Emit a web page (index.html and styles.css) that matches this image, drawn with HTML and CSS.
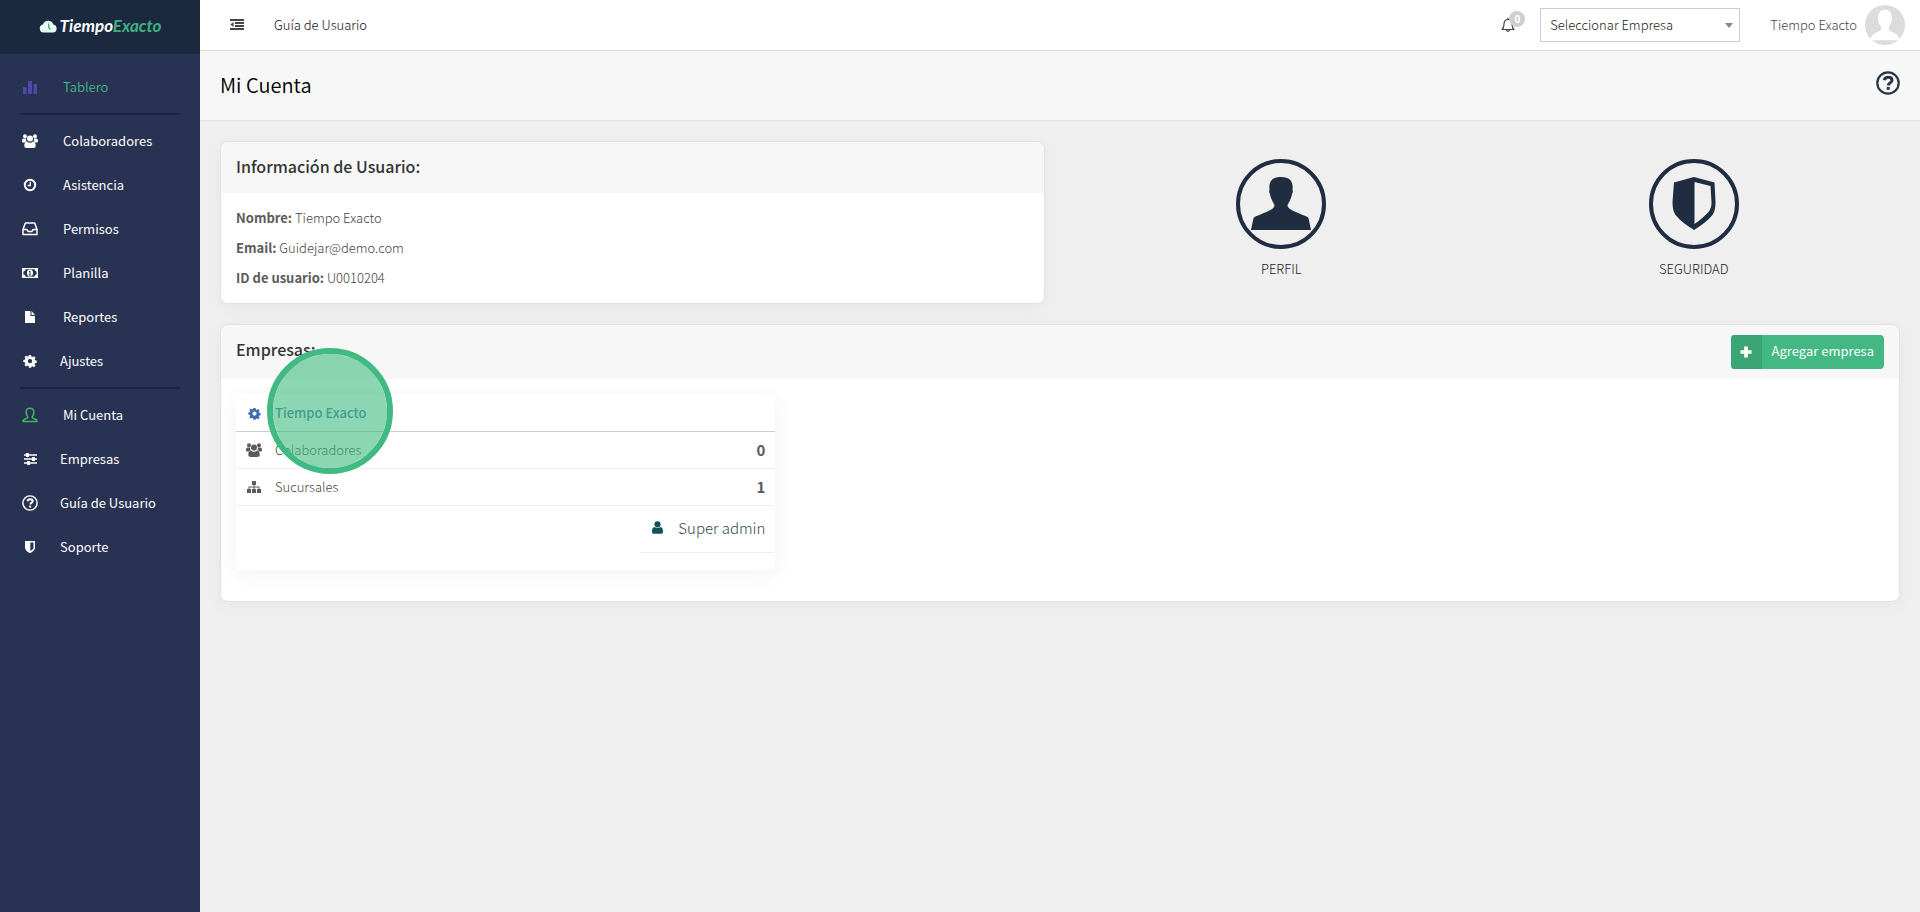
FILE: index.html
```
<!DOCTYPE html>
<html lang="es">
<head>
    <meta charset="UTF-8">
    <meta name="viewport" content="width=device-width, initial-scale=1.0">
    <title>Mi Cuenta - Tiempo Exacto</title>
    <link rel="stylesheet" href="styles.css">
</head>
<body>
    <!-- Iconos compartidos -->
    <svg class="sprite" aria-hidden="true">
        <symbol id="i-users" viewBox="0 0 16 14">
            <circle cx="3" cy="2.2" r="2"/><circle cx="13" cy="2.2" r="2"/>
            <path d="M1.6 4.4h2.6c-.5 1.5 0 2.600.6 3.200C3.800 7.600 3.200 8 2.700 8.600H1.400C.4 8.600 0 8 0 7.200 0 5.600.4 4.400 1.600 4.400zM14.400 4.400h-2.600c.5 1.500 0 2.600-.6 3.200 1 0 1.600.4 2.100 1h1.300c1 0 1.400-.6 1.400-1.400 0-1.600-.4-2.800-1.600-2.800z"/>
            <circle cx="8" cy="4.500" r="3"/>
            <path d="M5 7.600c.9.800 1.900 1.200 3 1.200s2.100-.4 3-1.200c2 .1 2.700 2 2.700 4.200 0 1.400-.9 2.200-2.200 2.200h-7c-1.300 0-2.200-.8-2.200-2.200C2.300 9.600 3 7.700 5 7.600z"/>
        </symbol>
        <symbol id="i-cog" viewBox="0 0 14 14">
            <path fill-rule="evenodd" d="M5.900 1h2.200l.4 1.700 1 .4 1.500-.9 1.500 1.500-.9 1.500.4 1 1.700.4v2.200l-1.700.4-.4 1 .9 1.500-1.500 1.500-1.500-.9-1 .4L8.100 13.700H5.900l-.4-1.700-1-.4-1.500.9L1.500 11l.9-1.500-.4-1L.3 8.100V6l1.700-.4.4-1-.9-1.500L3 1.700l1.500.9 1-.4zM7 4.900a2.200 2.200 0 1 0 0 4.400 2.200 2.200 0 0 0 0-4.400z"/>
        </symbol>
        <symbol id="i-help" viewBox="0 0 24 24">
            <circle cx="12" cy="12" r="10.700" fill="none" stroke="currentColor" stroke-width="2.200"/>
            <path d="M8.300 9.300c.4-2 1.800-3 3.900-3 2.300 0 3.800 1.100 3.800 2.900 0 2.600-3.700 2.700-3.700 5.200" fill="none" stroke="currentColor" stroke-width="3"/>
            <rect x="10.700" y="16" width="3" height="2.800"/>
        </symbol>
    </svg>

    <div class="app">
        <aside class="sidebar">
            <a class="logo" href="#">
                <svg width="19" height="13" viewBox="0 0 18 13"><path d="M4 12.500a4 4 0 0 1-.6-7.900A5.500 5.500 0 0 1 13.800 4.500 4.100 4.100 0 0 1 14 12.500z" fill="#eafaf4"/><path d="M9.200 3.500v4l1.800 2" fill="none" stroke="#3f9d7c" stroke-width="1.200"/></svg>
                <span>Tiempo<em>Exacto</em></span>
            </a>
            <nav class="menu">
                <a class="menu-item active" href="#">
                    <svg class="icon-stats" width="14" height="14" viewBox="0 0 14 14"><path d="M0 7h3.500v7H0zM5 1h4v13H5zM10.500 4H14v10h-3.500z"/></svg>
                    Tablero
                </a>
                <hr>
                <a class="menu-item" href="#"><svg width="16" height="14"><use href="#i-users"/></svg>Colaboradores</a>
                <a class="menu-item" href="#">
                    <svg width="14" height="14" viewBox="0 0 14 14"><g fill="none" stroke="currentColor" stroke-width="2"><circle cx="7" cy="7" r="5.200"/><path d="M7.300 3.800V7.500H4.600" stroke-width="1.300"/></g></svg>
                    Asistencia
                </a>
                <a class="menu-item" href="#">
                    <svg width="16" height="14" viewBox="0 0 16 14"><path d="M1 7.500L3.300 1h9.400L15 7.500V12.500H1zM1 7.500h3.800l1.400 2h3.600l1.400-2H15" fill="none" stroke="currentColor" stroke-width="1.500" stroke-linejoin="round"/></svg>
                    Permisos
                </a>
                <a class="menu-item" href="#">
                    <svg width="16" height="12" viewBox="0 0 16 12"><path fill-rule="evenodd" d="M0 1h16v10H0zM3.500 2.300A2.200 2.200 0 0 1 1.400 4.400v3.200a2.200 2.200 0 0 1 2.100 2.100h9a2.200 2.200 0 0 1 2.100-2.100V4.400a2.200 2.200 0 0 1-2.100-2.100z"/><ellipse cx="8" cy="6" rx="3" ry="3.400"/><path d="M7 4.800l1-.8v3.800M6.900 8h2.300" fill="none" stroke="#283252"/></svg>
                    Planilla
                </a>
                <a class="menu-item" href="#">
                    <svg width="12" height="14" viewBox="0 0 12 14"><path d="M1 1h5.500v5H11v7H1zM7.500 1L11 5H7.500z"/></svg>
                    Reportes
                </a>
                <a class="menu-item short" href="#"><svg width="14" height="14"><use href="#i-cog"/></svg>Ajustes</a>
                <hr>
                <a class="menu-item" href="#">
                    <svg class="icon-user" width="16" height="16" viewBox="0 0 16 16"><path d="M1 14.500c0-2.600 2.600-2.400 4.300-3.300.9-.5.5-1.500 0-2.200C4.300 7.500 3.900 6 4.200 4 4.500 2.100 6 1.300 8 1.300s3.500.8 3.800 2.700c.3 2-.1 3.500-1.100 5-.5.7-.9 1.700 0 2.200 1.700.9 4.300.7 4.300 3.300z" fill="none" stroke="currentColor" stroke-width="1.500" stroke-linejoin="round"/></svg>
                    Mi Cuenta
                </a>
                <a class="menu-item short" href="#">
                    <svg width="13" height="12" viewBox="0 0 13 12"><path d="M0 1.300h13v1.400H0zM0 5.300h13v1.400H0zM0 9.300h13v1.400H0zM2 0h3v4H2zM8 4h3v4H8zM3 8h3v4H3z"/></svg>
                    Empresas
                </a>
                <a class="menu-item short" href="#"><svg width="16" height="16"><use href="#i-help"/></svg>Guía de Usuario</a>
                <a class="menu-item short" href="#">
                    <svg width="12" height="14" viewBox="0 0 12 14"><path fill-rule="evenodd" d="M1 1h10v6.500c0 3-3 4.700-5 5.500-2-.8-5-2.500-5-5.500zM6.300 2.500v8.500c1.600-.8 3.200-2 3.200-3.500v-5z"/></svg>
                    Soporte
                </a>
            </nav>
        </aside>

        <div class="page">
            <header class="topbar">
                <button class="toggle" type="button" aria-label="Contraer menú">
                    <svg width="14" height="12" viewBox="0 0 14 12"><path d="M0 0h14v2H0zM5 3h9v2H5zM5 6h9v2H5zM0 9h14v2H0zM3.500 3v5L.3 5.500z"/></svg>
                </button>
                <a class="guide" href="#">Guía de Usuario</a>
                <button class="bell" type="button" aria-label="Notificaciones">
                    <svg width="14" height="16" viewBox="0 0 14 16"><path d="M1 12.500c1.500-1.300 2-2.500 2-5.500 0-2.800 1.500-4.700 4-4.700s4 1.900 4 4.700c0 3 .5 4.200 2 5.500zM7 2.300V.8M5.500 12.800a1.500 1.500 0 0 0 3 0" fill="none" stroke="currentColor" stroke-width="1.200" stroke-linejoin="round"/></svg>
                    <span class="badge">0</span>
                </button>
                <div class="company">
                    <select aria-label="Empresa">
                        <option>Seleccionar Empresa</option>
                    </select>
                </div>
                <a class="user" href="#">
                    Tiempo Exacto
                    <svg width="40" height="40" viewBox="0 0 40 40"><circle cx="20" cy="20" r="20" fill="#dcdcdc"/><path d="M13 13c0-5 2.500-8.300 7-8.300s7 3.300 7 8.300c0 4-1.300 7-3.200 8.700v3c2.500 2.500 10 3.500 11.200 10.500H5c1.200-7 8.700-8 11.200-10.500v-3C14.300 20 13 17 13 13z" fill="#fff"/></svg>
                </a>
            </header>

            <div class="page-title">
                <h1>Mi Cuenta</h1>
                <button class="help" type="button" aria-label="Ayuda"><svg width="24" height="24"><use href="#i-help"/></svg></button>
            </div>

            <main class="content">
                <div class="columns">
                    <section class="panel">
                        <div class="panel-head"><h2>Información de Usuario:</h2></div>
                        <div class="panel-body info">
                            <p><strong>Nombre:</strong> Tiempo Exacto</p>
                            <p><strong>Email:</strong> Guidejar@demo.com</p>
                            <p><strong>ID de usuario:</strong> U0010204</p>
                        </div>
                    </section>
                    <div class="shortcuts">
                        <a href="#">
                            <svg width="90" height="90" viewBox="0 0 90 90"><circle cx="45" cy="45" r="43" fill="none" stroke="#202c40" stroke-width="4"/><path d="M15 71l2.500-12c1-2 12-5 17-8 3-2 4-3 4-5-3-5-4-8-4.500-11-1-1-1-3-.5-4-1-8 2-13 11.500-13s12.500 5 11.500 13c.5 1 .5 3-.5 4-.5 3-1.500 6-4.500 11 0 2 1 3 4 5 5 3 16 6 17 8L75 71z"/></svg>
                            PERFIL
                        </a>
                        <a href="#">
                            <svg width="90" height="90" viewBox="0 0 90 90"><circle cx="45" cy="45" r="43" fill="none" stroke="#202c40" stroke-width="4"/><path fill-rule="evenodd" d="M45 18l20.500 5.500L66.500 43c0 6-1 10-3 13-5 6-11 10-18.500 15-7.500-5-13.500-9-18.500-15-2-3-3-7-3-13l1.500-19.500zM45.500 23v42c6-4 10-8 14-12 2-3 3-5 3-10l-1-16z"/></svg>
                            SEGURIDAD
                        </a>
                    </div>
                </div>

                <section class="panel">
                    <div class="panel-head with-action">
                        <h2>Empresas:</h2>
                        <button class="add" type="button">
                            <span class="add-icon"><svg width="12" height="12" viewBox="0 0 12 12"><path d="M4.200.5h3.600v3.700h3.700v3.600H7.800v3.700H4.200V7.800H.5V4.200h3.700z"/></svg></span>
                            <span class="add-text">Agregar empresa</span>
                        </button>
                    </div>
                    <div class="panel-body companies">
                        <article class="card">
                            <table>
                                <thead>
                                    <tr>
                                        <th class="ico"><svg width="13" height="13"><use href="#i-cog"/></svg></th>
                                        <th colspan="2"><a href="#">Tiempo Exacto</a></th>
                                    </tr>
                                </thead>
                                <tbody>
                                    <tr>
                                        <td class="ico"><svg width="16" height="14"><use href="#i-users"/></svg></td>
                                        <td>Colaboradores</td>
                                        <td class="num">0</td>
                                    </tr>
                                    <tr>
                                        <td class="ico"><svg width="16" height="12" viewBox="0 0 14 12"><path d="M5 0h4v4H5zM0 8h4v4H0zM5 8h4v4H5zM10 8h4v4h-4zM6.500 3.500h1v5h-1zM1.500 5.500h11v3h-1v-2h-9v2h-1z"/></svg></td>
                                        <td>Sucursales</td>
                                        <td class="num">1</td>
                                    </tr>
                                </tbody>
                            </table>
                            <a class="role" href="#">
                                <svg width="11" height="13" viewBox="0 0 11 13"><circle cx="5.500" cy="3.300" r="3.100"/><path d="M2.500 6c.8.700 1.900 1.100 3 1.100S7.700 6.700 8.500 6C10.200 6.200 11 8 11 10.400c0 1.500-.8 2.300-2.200 2.300H2.200C.8 12.700 0 11.900 0 10.400 0 8 .8 6.200 2.500 6z"/></svg>
                                Super admin
                            </a>
                            <span class="pointer"></span>
                        </article>
                    </div>
                </section>
            </main>
        </div>
    </div>
</body>
</html>
```
FILE: styles.css
```
* { box-sizing: border-box; }
body {
    margin: 0;
    font-family: "Noto Sans CJK SC", "Noto Sans", sans-serif;
    font-size: 13px;
    font-weight: 300;
    line-height: 20px;
    color: #444;
    background: #efefef;
}
h1, h2, p { margin: 0; }
a { color: inherit; text-decoration: none; }
button { font: inherit; color: inherit; border: 0; padding: 0; background: none; cursor: pointer; }
svg { fill: currentColor; flex: none; display: block; }
.sprite { position: absolute; width: 0; height: 0; }

.app { display: flex; min-height: 100vh; }

/* Menú lateral */
.sidebar { width: 200px; flex: none; background: #283252; color: #fff; }
.logo {
    display: flex;
    align-items: center;
    justify-content: center;
    height: 54px;
    padding-bottom: 2px;
    background: #1b293f;
    font-family: "Lato", sans-serif;
    font-size: 17px;
    font-weight: bold;
    font-style: italic;
    color: #fff;
}
.logo span { padding-left: 2px; }
.logo em { color: #3db184; }
.menu { padding-top: 11px; }
.menu hr { height: 2px; margin: 4px 20px; border: 0; background: #1b2440; }
.menu-item {
    display: grid;
    grid-template-columns: 60px 1fr;
    column-gap: 3px;
    align-items: center;
    height: 44px;
    font-weight: 400;
}
.menu-item.short { column-gap: 0; }
.menu-item svg { justify-self: center; }
.menu-item.active { color: #42b882; font-weight: 350; }
.icon-stats { color: #5048a8; }
.icon-user { color: #3fb65f; }

/* Barra superior */
.page { flex: 1; min-width: 0; }
.topbar {
    display: flex;
    align-items: center;
    height: 51px;
    padding: 0 15px 0 30px;
    background: #fff;
    border-bottom: 1px solid #dcdcdc;
}
.guide { margin-left: 30px; color: #111; }
.bell { position: relative; margin-left: auto; color: #444; }
.badge {
    position: absolute;
    top: -6px;
    left: 8px;
    width: 16px;
    height: 16px;
    border-radius: 8px;
    background: #cfcfcf;
    color: #fff;
    font-size: 10px;
    line-height: 16px;
    font-weight: bold;
}
.company { position: relative; width: 200px; margin: 0 30px 0 25px; }
.company::after {
    content: "";
    position: absolute;
    right: 7px;
    top: 15px;
    border: 4px solid transparent;
    border-top: 5px solid #888;
    border-bottom: 0;
}
.company select {
    display: block;
    width: 100%;
    height: 34px;
    padding: 0 9px;
    border: 1px solid #ccc;
    border-radius: 0;
    background: #fff;
    font: inherit;
    color: #222;
    appearance: none;
}
.user { display: flex; align-items: center; gap: 8px; }

.page-title {
    display: flex;
    align-items: flex-start;
    justify-content: space-between;
    height: 70px;
    padding: 20px;
    background: #f7f7f7;
    border-bottom: 1px solid #dfdfdf;
}
.page-title h1 { font-size: 20px; line-height: 28px; font-weight: 350; color: #000; }
.help { color: #2b3440; }

/* Contenido */
.content { display: grid; gap: 20px; padding: 20px; }
.columns { display: grid; grid-template-columns: 1fr 1fr; gap: 30px; }
.panel {
    border: 1px solid #e2e2e2;
    border-radius: 8px;
    background: #fff;
    box-shadow: 0 4px 16px rgba(0, 0, 0, 0.04);
}
.panel-head { padding: 9px 15px 11px; border-radius: 8px 8px 0 0; background: #f7f7f7; }
.panel-head h2 { font-size: 16px; line-height: 31px; font-weight: 500; color: #333; }
.panel-body { padding: 15px; }
.info { display: grid; gap: 10px; }
.info strong { font-weight: 700; color: #5b5b5b; }
.with-action { display: flex; justify-content: space-between; align-items: flex-start; padding: 10px 15px; }
.with-action h2 { line-height: 28px; }

.shortcuts { display: grid; grid-template-columns: 1fr 1fr; padding-top: 18px; }
.shortcuts a { display: flex; flex-direction: column; align-items: center; gap: 10px; color: #222; }
.shortcuts svg { color: #202c40; }

.add { display: flex; height: 34px; border-radius: 4px; overflow: hidden; background: #43b883; color: #fff; font-weight: 400; }
.add-icon { display: flex; align-items: center; justify-content: center; width: 31px; height: 34px; background: #3ca575; }
.add-text { padding: 0 10px; line-height: 32px; }

.companies { display: grid; grid-template-columns: repeat(3, 1fr); gap: 15px; padding-bottom: 31px; }
.card {
    position: relative;
    display: flex;
    flex-direction: column;
    padding-bottom: 17px;
    box-shadow: 0 4px 20px rgba(0, 0, 0, 0.06);
}
.card table { width: 100%; border-collapse: collapse; }
.card th, .card td { height: 37px; padding: 0 10px 0 0; text-align: left; border-bottom: 1px solid #eee; }
.card th { padding-top: 2px; border-bottom-color: #ccc; color: #41719f; font-weight: 500; }
.card .ico { width: 39px; padding-left: 10px; color: #5b5b5b; }
.card th.ico { padding-left: 12px; color: #3b6cb0; }
.card .num { text-align: right; font-size: 15px; font-weight: bold; color: #5b5b5b; }
.role {
    align-self: flex-end;
    display: flex;
    align-items: center;
    gap: 15px;
    height: 47px;
    padding: 0 10px 2px 12px;
    border-bottom: 1px solid #eee;
    font-size: 15px;
    color: #2c4a50;
}
.role svg { color: #125252; }
/* Marca del clic */
.pointer {
    position: absolute;
    left: 31px;
    top: -46px;
    width: 126px;
    height: 126px;
    border: 6px solid #40ba82;
    border-radius: 50%;
    background: rgba(64, 186, 130, 0.6);
    background-clip: padding-box;
}
```
